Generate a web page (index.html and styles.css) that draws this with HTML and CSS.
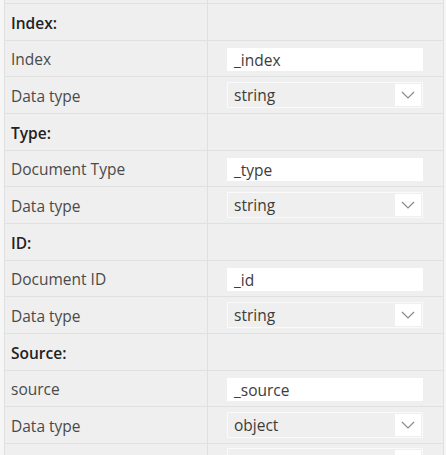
FILE: index.html
```html
<!DOCTYPE html>
<html>
<head>
<meta charset="utf-8">
<link rel="stylesheet" href="styles.css">
</head>
<body>
<div class="table">
  <div class="row partial"><div class="cell label"></div><div class="cell value"></div></div>

  <div class="row"><div class="cell label head">Index:</div><div class="cell value"></div></div>
  <div class="row"><div class="cell label">Index</div><div class="cell value"><div class="input">_index</div></div></div>
  <div class="row"><div class="cell label">Data type</div><div class="cell value"><div class="select"><span>string</span><span class="arrow"><svg width="14" height="8" viewBox="0 0 14 8"><path d="M1 1 L7 7 L13 1" fill="none" stroke="#8a8a8a" stroke-width="1.2"/></svg></span></div></div></div>

  <div class="row"><div class="cell label head">Type:</div><div class="cell value"></div></div>
  <div class="row"><div class="cell label">Document Type</div><div class="cell value"><div class="input">_type</div></div></div>
  <div class="row"><div class="cell label">Data type</div><div class="cell value"><div class="select"><span>string</span><span class="arrow"><svg width="14" height="8" viewBox="0 0 14 8"><path d="M1 1 L7 7 L13 1" fill="none" stroke="#8a8a8a" stroke-width="1.2"/></svg></span></div></div></div>

  <div class="row"><div class="cell label head">ID:</div><div class="cell value"></div></div>
  <div class="row"><div class="cell label">Document ID</div><div class="cell value"><div class="input">_id</div></div></div>
  <div class="row"><div class="cell label">Data type</div><div class="cell value"><div class="select"><span>string</span><span class="arrow"><svg width="14" height="8" viewBox="0 0 14 8"><path d="M1 1 L7 7 L13 1" fill="none" stroke="#8a8a8a" stroke-width="1.2"/></svg></span></div></div></div>

  <div class="row"><div class="cell label head">Source:</div><div class="cell value"></div></div>
  <div class="row"><div class="cell label">source</div><div class="cell value"><div class="input">_source</div></div></div>
  <div class="row"><div class="cell label">Data type</div><div class="cell value"><div class="select"><span>object</span><span class="arrow"><svg width="14" height="8" viewBox="0 0 14 8"><path d="M1 1 L7 7 L13 1" fill="none" stroke="#8a8a8a" stroke-width="1.2"/></svg></span></div></div></div>

  <div class="row"><div class="cell label"></div><div class="cell value"><div class="select"><span></span><span class="arrow"></span></div></div></div>
</div>
</body>
</html>
```
FILE: styles.css
```css
html, body {
  margin: 0;
  padding: 0;
  background: #f6f6f6;
  font-family: "Open Sans", "Noto Sans", sans-serif;
  font-size: 15.5px;
  overflow: hidden;
  height: 455px;
}
.table {
  margin-left: 4px;
  width: 438px;
  border-left: 1px solid #e0e0e0;
  border-right: 1px solid #e0e0e0;
  background: #efefef;
}
.row {
  display: grid;
  grid-template-columns: 203px 1fr;
  height: 36.667px;
  box-sizing: border-box;
  border-bottom: 1px solid #e0e0e0;
}
.row.partial {
  height: 4px;
}
.cell {
  display: flex;
  align-items: center;
  box-sizing: border-box;
}
.label {
  padding-left: 6px;
  padding-top: 2px;
  color: #4a4a4a;
  border-right: 1px solid #e0e0e0;
}
.label.head {
  color: #222222;
  font-weight: 600;
}
.value {
  padding-left: 19px;
}
.input {
  width: 196px;
  height: 23px;
  margin-top: 2px;
  background: #ffffff;
  color: #3c3c3c;
  padding-left: 7px;
  padding-top: 1px;
  box-sizing: border-box;
  display: flex;
  align-items: center;
}
.select {
  width: 196px;
  height: 26px;
  box-sizing: border-box;
  border: 1px solid #fafafa;
  background: #efefef;
  color: #3c3c3c;
  display: flex;
  align-items: center;
  justify-content: space-between;
  padding-left: 6px;
  padding-right: 1px;
  margin-top: -1px;
}
.select span:first-child {
  padding-top: 1px;
}
.arrow {
  width: 26px;
  height: 22px;
  background: #ffffff;
  display: flex;
  align-items: center;
  justify-content: center;
  padding-top: 1px;
  box-sizing: border-box;
}
```
